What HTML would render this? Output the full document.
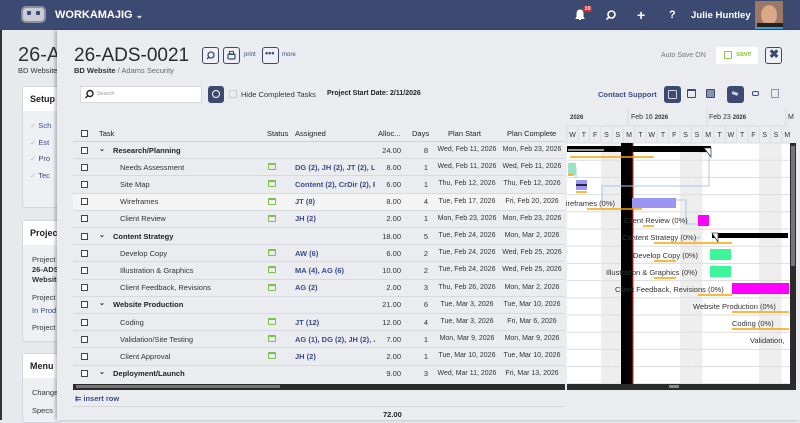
<!DOCTYPE html>
<html><head><meta charset="utf-8"><style>
*{box-sizing:border-box;margin:0;padding:0}
body{width:800px;height:420px;overflow:hidden;background:#e8e9ed;font-family:"Liberation Sans",sans-serif;position:relative;color:#333}
.a{position:absolute;white-space:nowrap}
.top{position:absolute;left:0;top:0;width:800px;height:30px;background:#3c4a72}
.w{color:#fff;font-weight:bold}
.ib{position:absolute;width:17px;height:17px;border:1.5px solid #3c4a72;border-radius:3px;background:#eef0f4}
.nv{position:absolute;background:#3c4a72;border-radius:3px}
.t{font-size:7.5px;color:#333}
.d{font-size:7px;color:#333}
.b{font-weight:bold;color:#222}
.asg{color:#3c4a8a;font-weight:bold;font-size:7.5px}
.cb{position:absolute;width:7px;height:7px;border:1px solid #444;background:#fff;left:81px}
.cal{position:absolute;left:268px;width:8px;height:7px;border:1.3px solid #7cc24a;border-top-width:2.5px;border-radius:1px}
.r{text-align:right}
</style></head><body>
<div class="top"></div>
<div class="a" style="left:0;top:30px;width:2px;height:390px;background:#333"></div>
<div class="a" style="left:21px;top:6px;width:25px;height:17px;background:#c9ccd4;border-radius:5px;border:2px solid #8a90a0"></div>
<div class="a" style="left:27px;top:11px;width:4px;height:4px;background:#3c4a72;border-radius:1px"></div>
<div class="a" style="left:36px;top:11px;width:4px;height:4px;background:#3c4a72;border-radius:1px"></div>
<div class="a w" style="left:55px;top:9px;font-size:11px">WORKAMAJIG <span style="font-size:9px">&#8964;</span></div>
<svg class="a" style="left:574px;top:9px" width="12" height="12" viewBox="0 0 12 12"><path d="M6 1C3.5 1 3 3 3 5v3L2 9.5h8L9 8V5C9 3 8.5 1 6 1z M5 10.5h2" fill="#fff" stroke="#fff"/></svg>
<div class="a" style="left:583px;top:6px;background:#d42a2a;color:#fff;font-size:5.5px;font-weight:bold;padding:0 1.5px;border-radius:2px">10</div>
<svg class="a" style="left:605px;top:10px" width="11" height="11"><circle cx="6.5" cy="4.5" r="3.5" fill="none" stroke="#fff" stroke-width="1.6"/><path d="M4 7L1.5 9.5" stroke="#fff" stroke-width="1.6"/></svg>
<div class="a w" style="left:637px;top:7px;font-size:14px">+</div>
<div class="a w" style="left:669px;top:9px;font-size:11px">?</div>
<div class="a w" style="left:691px;top:10px;font-size:9.6px">Julie Huntley</div>
<div class="a" style="left:755px;top:1px;width:28px;height:28px;background:#9a7a66;border-bottom:2px solid #3aa0e0;overflow:hidden"><div style="position:absolute;left:6px;top:4px;width:16px;height:20px;border-radius:50%;background:#d8a888"></div><div style="position:absolute;left:2px;top:22px;width:26px;height:8px;background:#222"></div></div>
<div class="a" style="left:18px;top:44px;font-size:20px;color:#333">26-A</div>
<div class="a t" style="left:18px;top:66px">BD Website</div>
<div class="a" style="left:22px;top:86px;width:40px;height:122px;background:#eef0f3;border:1px solid #d4d6dc;border-radius:3px"></div>
<div class="a" style="left:23px;top:87px;width:40px;height:24px;background:#fff"></div>
<div class="a b" style="left:30px;top:94px;font-size:9px">Setup</div>
<div class="a" style="left:30px;top:118px;font-size:7.5px;color:#bbb;line-height:16.5px">✓ <span style="color:#3c4a8a">Sch</span><br>✓ <span style="color:#3c4a8a">Est</span><br>✓ <span style="color:#3c4a8a">Pro</span><br>✓ <span style="color:#3c4a8a">Tec</span></div>
<div class="a" style="left:22px;top:220px;width:40px;height:122px;background:#eef0f3;border:1px solid #d4d6dc;border-radius:3px"></div>
<div class="a" style="left:23px;top:221px;width:40px;height:24px;background:#fff"></div>
<div class="a b" style="left:30px;top:228px;font-size:9px">Project</div>
<div class="a t" style="left:32px;top:255px;line-height:10px">Project<br><b>26-ADS</b><br><b>Website</b></div>
<div class="a t" style="left:32px;top:293px">Project</div>
<div class="a t" style="left:32px;top:306px;color:#3c4a8a">In Prod</div>
<div class="a t" style="left:32px;top:323px">Project</div>
<div class="a" style="left:22px;top:353px;width:40px;height:70px;background:#eef0f3;border:1px solid #d4d6dc;border-radius:3px"></div>
<div class="a" style="left:23px;top:354px;width:40px;height:24px;background:#fff"></div>
<div class="a b" style="left:30px;top:361px;font-size:9px">Menu</div>
<div class="a t" style="left:32px;top:388px">Change</div>
<div class="a t" style="left:32px;top:406px">Specs</div>
<div class="a" style="left:57px;top:30px;width:743px;height:390px;background:#ebecf0;box-shadow:-2px 0 3px rgba(0,0,0,.25)"></div>
<div class="a" style="left:74px;top:45px;font-size:19px;color:#2a2a2a">26-ADS-0021</div>
<div class="a t" style="left:74px;top:66px"><b style="color:#333">BD Website</b> <span style="color:#666">/ Adams Security</span></div>
<div class="ib" style="left:202px;top:47px"></div>
<svg class="a" style="left:205px;top:50px" width="11" height="11"><circle cx="6" cy="5" r="3" fill="none" stroke="#3c4a72" stroke-width="1.3"/><path d="M4 7L2 9" stroke="#3c4a72" stroke-width="1.3"/></svg>
<div class="ib" style="left:223px;top:47px"></div>
<svg class="a" style="left:226px;top:50px" width="11" height="11"><rect x="2" y="4" width="7" height="5" rx="1" fill="none" stroke="#3c4a72" stroke-width="1.2"/><rect x="3.5" y="1.5" width="4" height="3" fill="none" stroke="#3c4a72"/></svg>
<div class="a" style="left:244px;top:52px;font-size:6px;color:#3c4a8a">print</div>
<div class="ib" style="left:262px;top:47px"></div>
<div class="a" style="left:265px;top:48px;font-size:9px;color:#3c4a72;font-weight:bold">•••</div>
<div class="a" style="left:282px;top:52px;font-size:6px;color:#3c4a8a">more</div>
<div class="a" style="left:661px;top:52px;font-size:7px;color:#777">Auto Save ON</div>
<div class="a" style="left:716px;top:47px;width:42px;height:17px;background:#fff"></div>
<div class="a" style="left:724px;top:51px;width:8px;height:8px;border:1.3px solid #8cc84b;border-radius:1px"></div>
<div class="a" style="left:736px;top:51px;font-size:7px;color:#8cc84b;font-weight:bold">save</div>
<div class="ib" style="left:765px;top:47px"></div>
<div class="a" style="left:769px;top:47px;font-size:12px;font-weight:bold;color:#3c4a72">✖</div>
<div class="a" style="left:80px;top:86px;width:122px;height:17px;background:#fff;border:1px solid #d8d8dc"></div>
<svg class="a" style="left:84px;top:89px" width="10" height="10"><circle cx="6" cy="4.5" r="3" fill="none" stroke="#222" stroke-width="1.4"/><path d="M4 6.5L1.5 9" stroke="#222" stroke-width="1.4"/></svg>
<div class="a" style="left:97px;top:91px;font-size:5.5px;color:#999">Search</div>
<div class="nv" style="left:208px;top:86px;width:16px;height:17px"></div>
<div class="a" style="left:212px;top:90px;width:8px;height:8px;border:1.3px solid #fff;border-radius:50%"></div>
<div class="a" style="left:229px;top:90px;width:8px;height:8px;border:1px solid #ccc;background:#eee"></div>
<div class="a t" style="left:241px;top:90px;color:#333">Hide Completed Tasks</div>
<div class="a t b" style="left:327px;top:90px;font-size:7px">Project Start Date: 2/11/2026</div>
<div class="a" style="left:598px;top:90px;font-size:7.5px;color:#3c4a8a;font-weight:bold">Contact Support</div>
<div class="nv" style="left:664px;top:86px;width:17px;height:17px"></div>
<div class="a" style="left:668px;top:90px;width:9px;height:9px;border:1.2px solid #cfd4e4;border-radius:1px"></div>
<div class="a" style="left:687px;top:89px;width:9px;height:9px;border:1.2px solid #3c4a72;border-top-width:2.5px;border-radius:1px"></div>
<div class="a" style="left:706px;top:89px;width:9px;height:9px;border:1.2px solid #3c4a72;background:#8a92b0;border-radius:1px"></div>
<div class="nv" style="left:727px;top:86px;width:17px;height:17px"></div>
<div class="a" style="left:732px;top:92px;width:6px;height:3px;background:#cfd4e4;transform:rotate(20deg)"></div>
<div class="a" style="left:752px;top:91px;width:7px;height:5px;border:1.2px solid #3c4a72;border-radius:2px"></div>
<div class="a" style="left:771px;top:89px;width:8px;height:9px;border:1px solid #8a92b0"></div>
<div class="a" style="left:73px;top:124px;width:492px;height:262px;background:#ebecf0"></div>
<div class="a" style="left:73px;top:193px;width:492px;height:17px;background:#f4f4f5"></div>
<div class="a t" style="left:99px;top:129px;color:#222">Task</div>
<div class="a t" style="left:267px;top:129px;color:#222">Status</div>
<div class="a t" style="left:295px;top:129px;color:#222">Assigned</div>
<div class="a t" style="left:378px;top:129px;color:#222">Alloc...</div>
<div class="a t" style="left:412px;top:129px;color:#222">Days</div>
<div class="a t" style="left:448px;top:129px;color:#222">Plan Start</div>
<div class="a t" style="left:507px;top:129px;color:#222">Plan Complete</div>
<div class="cb" style="top:130px"></div>
<div id="rows"></div>
<div class="a" style="left:73px;top:384px;width:492px;height:6px;background:#2b2b2b"></div>
<div class="a" style="left:76px;top:385px;width:204px;height:3px;background:#777"></div>
<div class="a" style="left:75px;top:394px;font-size:7.5px;color:#3c4a8a;font-weight:bold">⇇ insert row</div>
<div class="a" style="left:73px;top:406px;width:492px;height:1px;background:#d4d6dc"></div>
<div class="a b" style="left:383px;top:410px;font-size:7.5px">72.00</div>
<svg class="a" style="left:566px;top:108px" width="234" height="312" font-family="Liberation Sans" font-size="7.5">
<rect x="0" y="0" width="234" height="312" fill="#ebecf0"/>
<rect x="1" y="35" width="223" height="241" fill="#fff"/>
<g id="we"></g>
<text x="4" y="11" font-size="6" font-weight="bold" fill="#333">2026</text>
<line x1="62" y1="0" x2="62" y2="17" stroke="#d8d8d8"/>
<text x="65" y="11" font-size="7" fill="#333">Feb 16 <tspan font-size="6" font-weight="bold">2026</tspan></text>
<line x1="141" y1="0" x2="141" y2="17" stroke="#d8d8d8"/>
<text x="143" y="11" font-size="7" fill="#333">Feb 23 <tspan font-size="6" font-weight="bold">2026</tspan></text>
<line x1="220" y1="0" x2="220" y2="17" stroke="#d8d8d8"/>
<text x="222" y="11" font-size="7" fill="#333">M</text>
<g id="days" font-size="7" fill="#333"></g>
<g id="hl" stroke="#ddd"></g>
<rect x="55" y="35" width="12" height="241" fill="#000"/>
<line x1="67" y1="35" x2="67" y2="276" stroke="#f22" stroke-width="1"/>
<path d="M133 44H143V78H36V97 M5 54V60H10V70 M110 92H120V116H131 M128 130H133V128 M145 158H151V168" fill="none" stroke="#a8c8e8" stroke-width="1"/>
<rect x="1" y="38" width="144" height="6" fill="#000"/>
<rect x="2" y="41" width="36" height="2" fill="#999"/>
<path d="M138 40h7v9z" fill="#fff" stroke="#444" stroke-width=".8"/>
<line x1="4" y1="49" x2="88" y2="49" stroke="#f5a300" stroke-width="1.5"/>
<rect x="2" y="55" width="8" height="12" fill="#9ce3c4"/>
<line x1="2" y1="67" x2="8" y2="67" stroke="#f5a300" stroke-width="1.5"/>
<rect x="10" y="72" width="11" height="10" fill="#9a96f2"/><line x1="10" y1="77" x2="21" y2="77" stroke="#000" stroke-width="1.5"/>
<line x1="10" y1="84" x2="21" y2="84" stroke="#f5a300" stroke-width="1.5"/>
<text x="49" y="98" text-anchor="end" fill="#333">ireframes (0%)</text>
<rect x="66" y="90" width="44" height="10" fill="#9a96f2"/>
<line x1="21" y1="101" x2="76" y2="101" stroke="#f5a300" stroke-width="1.5"/>
<text x="58" y="115" fill="#333">Client Review (0%)</text>
<rect x="132" y="107" width="11" height="11" fill="#f0f"/>
<line x1="77" y1="118" x2="88" y2="118" stroke="#f5a300" stroke-width="1.5"/>
<text x="56" y="132" fill="#333">Content Strategy (0%)</text>
<rect x="146" y="125" width="76" height="5" fill="#000"/>
<path d="M146 125h6v9z" fill="#fff" stroke="#444" stroke-width=".8"/>
<line x1="88" y1="135" x2="166" y2="135" stroke="#f5a300" stroke-width="1.5"/>
<text x="67" y="150" fill="#333">Develop Copy (0%)</text>
<rect x="144" y="141" width="21" height="11" fill="#3ff59a"/>
<line x1="88" y1="153" x2="110" y2="153" stroke="#f5a300" stroke-width="1.5"/>
<text x="40" y="167" fill="#333">Illustration &amp; Graphics (0%)</text>
<rect x="144" y="158" width="21" height="11" fill="#3ff59a"/>
<line x1="88" y1="170" x2="110" y2="170" stroke="#f5a300" stroke-width="1.5"/>
<text x="49" y="184" fill="#333">Client Feedback, Revisions (0%)</text>
<rect x="166" y="175" width="57" height="11" fill="#f0f"/>
<line x1="132" y1="187" x2="166" y2="187" stroke="#f5a300" stroke-width="1.5"/>
<text x="127" y="201" fill="#333">Website Production (0%)</text>
<line x1="166" y1="204" x2="223" y2="204" stroke="#f5a300" stroke-width="1.5"/>
<text x="166" y="218" fill="#333">Coding (0%)</text>
<line x1="166" y1="221" x2="223" y2="221" stroke="#f5a300" stroke-width="1.5"/>
<text x="184" y="235" fill="#333">Validation,</text>
<rect x="224" y="35" width="6" height="243" fill="#2b2b2b"/>
<rect x="225" y="38" width="4" height="120" fill="#777"/>
<rect x="1" y="276" width="229" height="6" fill="#2b2b2b"/>
<rect x="103" y="277" width="10" height="3" fill="#888"/>
</svg>
<script>
var rows=[
[1,'Research/Planning',0,'','24.00','8','Wed, Feb 11, 2026','Mon, Feb 23, 2026'],
[0,'Needs Assessment',1,'DG (2), JH (2), JT (2), LT','8.00','1','Wed, Feb 11, 2026','Wed, Feb 11, 2026'],
[0,'Site Map',1,'Content (2), CrDir (2), PM','6.00','1','Thu, Feb 12, 2026','Thu, Feb 12, 2026'],
[0,'Wireframes',1,'JT (8)','8.00','4','Tue, Feb 17, 2026','Fri, Feb 20, 2026'],
[0,'Client Review',1,'JH (2)','2.00','1','Mon, Feb 23, 2026','Mon, Feb 23, 2026'],
[1,'Content Strategy',0,'','18.00','5','Tue, Feb 24, 2026','Mon, Mar 2, 2026'],
[0,'Develop Copy',1,'AW (6)','6.00','2','Tue, Feb 24, 2026','Wed, Feb 25, 2026'],
[0,'Illustration &amp; Graphics',1,'MA (4), AG (6)','10.00','2','Tue, Feb 24, 2026','Wed, Feb 25, 2026'],
[0,'Client Feedback, Revisions',1,'AG (2)','2.00','3','Thu, Feb 26, 2026','Mon, Mar 2, 2026'],
[1,'Website Production',0,'','21.00','6','Tue, Mar 3, 2026','Tue, Mar 10, 2026'],
[0,'Coding',1,'JT (12)','12.00','4','Tue, Mar 3, 2026','Fri, Mar 6, 2026'],
[0,'Validation/Site Testing',1,'AG (1), DG (2), JH (2), JT','7.00','1','Mon, Mar 9, 2026','Mon, Mar 9, 2026'],
[0,'Client Approval',1,'JH (2)','2.00','1','Tue, Mar 10, 2026','Tue, Mar 10, 2026'],
[1,'Deployment/Launch',0,'','9.00','3','Wed, Mar 11, 2026','Fri, Mar 13, 2026']];
var h='';
for(var i=0;i<rows.length;i++){var r=rows[i],y=141+i*17.2,ty=y+4.5;
h+='<div class="a" style="left:73px;top:'+y+'px;width:492px;height:1px;background:#d8d9de"></div>';
h+='<div class="cb" style="top:'+(y+5.5)+'px"></div>';
if(r[0])h+='<div class="a b" style="left:99px;top:'+(ty-1)+'px;font-size:7px">&#8964;</div><div class="a t b" style="left:113px;top:'+ty+'px">'+r[1]+'</div>';
else h+='<div class="a t" style="left:120px;top:'+ty+'px">'+r[1]+'</div>';
if(r[2])h+='<div class="cal" style="top:'+(y+5)+'px"></div>';
h+='<div class="a asg" style="left:295px;top:'+ty+'px;width:80px;overflow:hidden">'+r[3]+'</div>';
h+='<div class="a t r" style="left:360px;width:41px;top:'+ty+'px">'+r[4]+'</div>';
h+='<div class="a t r" style="left:410px;width:18px;top:'+ty+'px">'+r[5]+'</div>';
h+='<div class="a d" style="left:436px;width:62px;text-align:center;top:'+(ty+0.5)+'px">'+r[6]+'</div>';
h+='<div class="a d" style="left:501px;width:62px;text-align:center;top:'+(ty+0.5)+'px">'+r[7]+'</div>';}
h+='<div class="a" style="left:73px;top:141px;width:492px;height:1px;background:#d0d1d6"></div>';
document.getElementById('rows').innerHTML=h;
var L='WTFSSMTWTFSSMTWTFSSM',d='',we='',hl='';
for(var k=0;k<20;k++){var x=1+k*11.3;d+='<text x="'+(x+5.6)+'" y="29" text-anchor="middle">'+L[k]+'</text>';
d+='<line x1="'+x+'" y1="18" x2="'+x+'" y2="35" stroke="#ddd"/>';
if(L[k]=='S')we+='<rect x="'+x+'" y="35" width="11.3" height="241" fill="#eee"/>';}
for(var j=0;j<15;j++){var yy=35+j*17.2;hl+='<line x1="1" y1="'+yy+'" x2="224" y2="'+yy+'"/>';}
hl+='<line x1="0" y1="18" x2="224" y2="18"/>';
document.getElementById('days').innerHTML=d;document.getElementById('we').innerHTML=we;document.getElementById('hl').innerHTML=hl;
</script>
</body></html>
